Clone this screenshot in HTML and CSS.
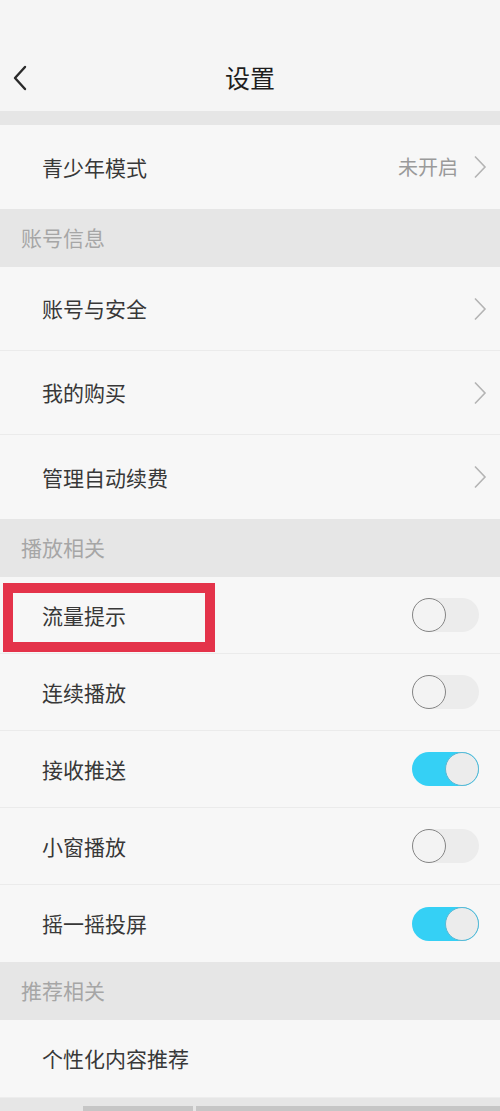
FILE: index.html
```html
<!DOCTYPE html>
<html lang="zh-CN">
<head>
<meta charset="utf-8">
<title>设置</title>
<link rel="stylesheet" href="styles.css">
</head>
<body>
<div class="page">
  <header class="topbar">
    <svg class="back" width="16" height="26" viewBox="0 0 16 26"><path d="M13 2 L3 13 L13 24" fill="none" stroke="#2a2a2a" stroke-width="2.4" stroke-linecap="round" stroke-linejoin="round"/></svg>
    <h1 class="title">设置</h1>
  </header>
  <div class="gap"></div>

  <div class="row tall">
    <span class="label">青少年模式</span>
    <span class="right"><span class="value">未开启</span><svg class="chev" width="14" height="24" viewBox="0 0 14 24"><path d="M2 1.5 L12 12 L2 22.5" fill="none" stroke="#b4b4b4" stroke-width="1.6"/></svg></span>
  </div>

  <div class="section">账号信息</div>
  <div class="row tall sep">
    <span class="label">账号与安全</span>
    <span class="right"><svg class="chev" width="14" height="24" viewBox="0 0 14 24"><path d="M2 1.5 L12 12 L2 22.5" fill="none" stroke="#b4b4b4" stroke-width="1.6"/></svg></span>
  </div>
  <div class="row tall sep">
    <span class="label">我的购买</span>
    <span class="right"><svg class="chev" width="14" height="24" viewBox="0 0 14 24"><path d="M2 1.5 L12 12 L2 22.5" fill="none" stroke="#b4b4b4" stroke-width="1.6"/></svg></span>
  </div>
  <div class="row tall">
    <span class="label">管理自动续费</span>
    <span class="right"><svg class="chev" width="14" height="24" viewBox="0 0 14 24"><path d="M2 1.5 L12 12 L2 22.5" fill="none" stroke="#b4b4b4" stroke-width="1.6"/></svg></span>
  </div>

  <div class="section">播放相关</div>
  <div class="row sep marked">
    <span class="label">流量提示</span>
    <span class="toggle"><span class="knob"></span></span>
    <div class="mark"></div>
  </div>
  <div class="row sep">
    <span class="label">连续播放</span>
    <span class="toggle"><span class="knob"></span></span>
  </div>
  <div class="row sep">
    <span class="label">接收推送</span>
    <span class="toggle on"><span class="knob"></span></span>
  </div>
  <div class="row sep">
    <span class="label">小窗播放</span>
    <span class="toggle"><span class="knob"></span></span>
  </div>
  <div class="row">
    <span class="label">摇一摇投屏</span>
    <span class="toggle on"><span class="knob"></span></span>
  </div>

  <div class="section">推荐相关</div>
  <div class="row">
    <span class="label">个性化内容推荐</span>
  </div>
  <div class="foot">
    <div class="foot-bar a"></div>
    <div class="foot-bar b"></div>
  </div>
</div>
</body>
</html>
```

FILE: styles.css
```css
* { box-sizing: border-box; }
html, body { margin: 0; padding: 0; }
body {
  background: #f7f7f7;
  font-family: "Noto Sans CJK SC", "Noto Sans", sans-serif;
  color: #333;
}
.page { width: 500px; height: 1111px; overflow: hidden; display: flex; flex-direction: column; }
.topbar {
  height: 111px;
  background: #f5f5f5;
  display: flex;
  align-items: center;
  justify-content: center;
  padding-top: 44px;
  position: relative;
}
.back { position: absolute; left: 12px; top: 65px; }
.title {
  margin: 0;
  font-size: 25px;
  font-weight: 400;
  color: #1e1e1e;
  line-height: 1;
}
.gap { height: 14px; background: #e6e6e6; }
.row {
  height: 77px;
  flex: none;
  display: flex;
  align-items: center;
  justify-content: space-between;
  padding: 0 21px 0 42px;
  background: #f7f7f7;
  position: relative;
}
.row.tall { height: 84px; }
.row.sep { border-bottom: 1px solid #ebebeb; }
.label { font-size: 21px; color: #383838; line-height: 1; }
.right { display: flex; align-items: center; gap: 15px; }
.value { font-size: 20px; color: #9a9a9a; line-height: 1; }
.chev { display: block; margin-right: -8px; }
.section {
  height: 58px;
  flex: none;
  background: #e6e6e6;
  display: flex;
  align-items: center;
  padding-left: 21px;
  padding-bottom: 2px;
  font-size: 21px;
  color: #a6a6a6;
}
.toggle {
  width: 67px;
  height: 34px;
  border-radius: 17px;
  background: #ececec;
  position: relative;
  flex: none;
  display: flex;
  align-items: center;
}
.knob {
  width: 34px;
  height: 34px;
  border-radius: 50%;
  background: #f3f3f3;
  border: 1.6px solid #858585;
}
.toggle.on { background: #35d0f5; justify-content: flex-end; }
.toggle.on .knob { background: #ececec; border: 1.5px solid #5ab8d4; }
.mark {
  position: absolute;
  left: 3px;
  top: 6px;
  width: 212px;
  height: 69px;
  border: 10.5px solid #e4334a;
  pointer-events: none;
}
.foot {
  flex: 1;
  background: #e6e6e6;
  position: relative;
  border-top: 1px solid #ededed;
}
.foot-bar { position: absolute; bottom: 0; height: 5px; background: #c6c6c6; }
.foot-bar.a { left: 83px; width: 110px; }
.foot-bar.b { left: 196px; right: 0; }
```
